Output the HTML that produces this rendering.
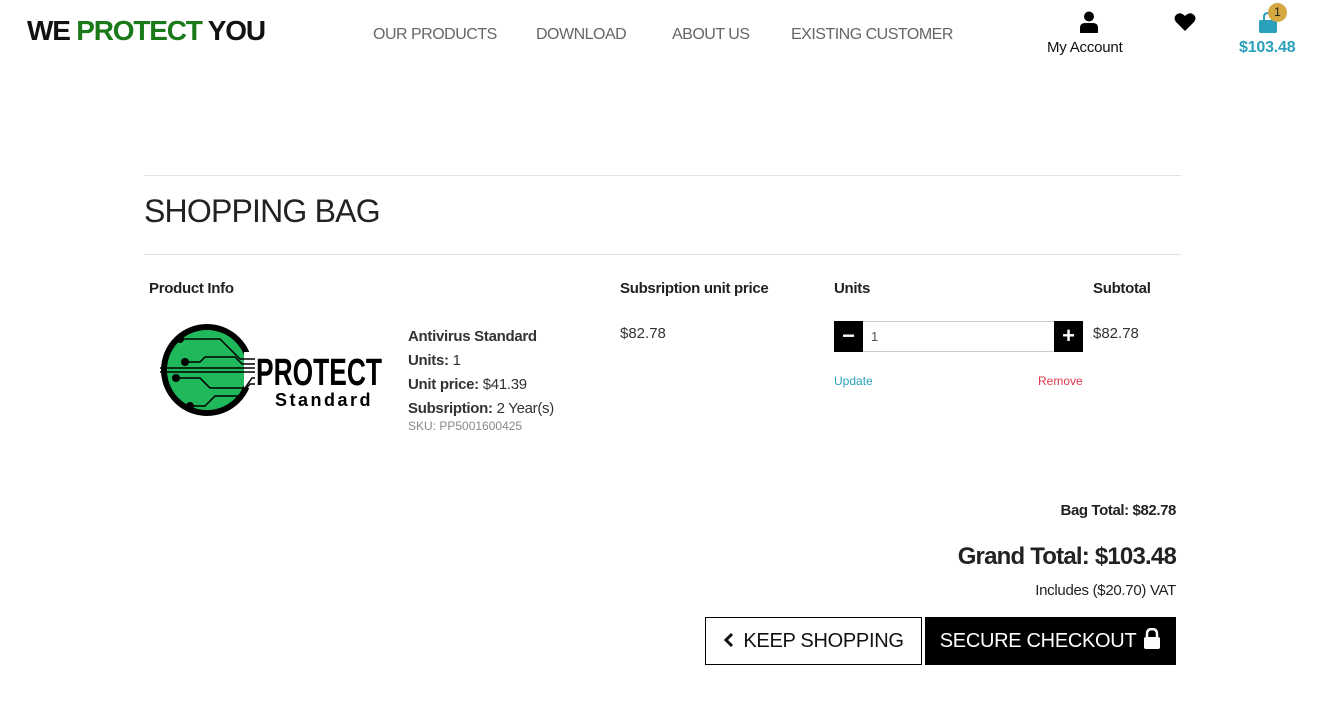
<!DOCTYPE html>
<html><head><meta charset="utf-8"><style>
*{margin:0;padding:0;box-sizing:border-box}
body{width:1325px;height:711px;background:#fff;font-family:"Liberation Sans",sans-serif;color:#222;position:relative;overflow:hidden}
.a{position:absolute;white-space:nowrap}
.nav{font-size:16px;color:#666;top:26px;letter-spacing:-0.5px}
</style></head><body>
<div class="a" style="left:27px;top:15px;font-size:28px;font-weight:bold;letter-spacing:-1.2px;color:#111">WE <span style="color:#1a7a1a">PROTECT</span> YOU</div>
<div class="a nav" style="left:373px">OUR PRODUCTS</div>
<div class="a nav" style="left:536px">DOWNLOAD</div>
<div class="a nav" style="left:672px">ABOUT US</div>
<div class="a nav" style="left:791px">EXISTING CUSTOMER</div>
<svg class="a" style="left:1079px;top:11px" width="20" height="22" viewBox="0 0 20 22"><circle cx="10" cy="5.5" r="5" fill="#000"/><path d="M1 22 V17 Q1 12 6 12 H14 Q19 12 19 17 V22Z" fill="#000"/></svg>
<div class="a" style="left:1047px;top:39px;font-size:15px;color:#111;letter-spacing:-0.2px">My Account</div>
<svg class="a" style="left:1174px;top:12px" width="22" height="20" viewBox="0 0 22 20"><path d="M11 19 L2 10 Q-1 6 2 3 Q6 -1 11 4 Q16 -1 20 3 Q23 6 20 10Z" fill="#000"/></svg>
<svg class="a" style="left:1258px;top:12px" width="22" height="22" viewBox="0 0 22 22"><path d="M6 8 V5 Q6 1 10 1 Q14 1 14 5 V8" stroke="#2aa0bc" stroke-width="2" fill="none"/><rect x="1" y="8" width="18" height="13" rx="1.5" fill="#2aa0bc"/></svg>
<div class="a" style="left:1268px;top:3px;width:19px;height:19px;border-radius:50%;background:#d4a843;font-size:12px;text-align:center;line-height:19px;color:#222">1</div>
<div class="a" style="left:1239px;top:39px;font-size:16px;font-weight:bold;color:#2aa0bc;letter-spacing:-0.2px">$103.48</div>

<div class="a" style="left:144px;top:175px;width:1037px;height:1px;background:#e2e2e2"></div>
<div class="a" style="left:144px;top:193px;font-size:32px;color:#222;letter-spacing:-0.8px">SHOPPING BAG</div>
<div class="a" style="left:144px;top:254px;width:1037px;height:1px;background:#e2e2e2"></div>

<div class="a" style="left:149px;top:280px;font-size:15px;font-weight:bold;letter-spacing:-0.3px">Product Info</div>
<div class="a" style="left:620px;top:280px;font-size:15px;font-weight:bold;letter-spacing:-0.3px">Subsription unit price</div>
<div class="a" style="left:834px;top:280px;font-size:15px;font-weight:bold;letter-spacing:-0.3px">Units</div>
<div class="a" style="left:1093px;top:280px;font-size:15px;font-weight:bold;letter-spacing:-0.3px">Subtotal</div>

<svg class="a" style="left:160px;top:322px" width="230" height="96" viewBox="0 0 230 96">
<circle cx="47" cy="48" r="43" fill="#1fb85a" stroke="#000" stroke-width="6"/>
<rect x="84" y="30" width="12" height="36" fill="#fff"/>
<g stroke="#000" stroke-width="1.5" fill="none">
<path d="M0 46 H95"/><path d="M0 50 H95"/>
<path d="M20 17 H60 L80 37 H95"/><path d="M25 40 H40 L45 35 H75 L82 42 H95"/>
<path d="M16 56 H40 L50 66 H85 L92 56 H95"/><path d="M30 84 H45 L55 74 H80 L90 62 H95"/>
</g>
<g fill="#000"><circle cx="20" cy="17" r="4"/><circle cx="25" cy="40" r="4"/><circle cx="16" cy="56" r="4"/><circle cx="30" cy="84" r="4"/></g>
<text x="96" y="63" font-family="Liberation Sans Narrow,Liberation Sans,sans-serif" font-size="38" font-weight="bold" textLength="126" lengthAdjust="spacingAndGlyphs">PROTECT</text>
<text x="115" y="84" font-family="Liberation Sans,sans-serif" font-size="18" font-weight="bold" letter-spacing="2.5">Standard</text>
</svg>

<div class="a" style="left:408px;top:325px;font-size:15px;line-height:24px;color:#333;letter-spacing:-0.3px">
<b>Antivirus Standard</b><br><b>Units:</b> 1<br><b>Unit price:</b> $41.39<br><b>Subsription:</b> 2 Year(s)</div>
<div class="a" style="left:408px;top:419px;font-size:12px;color:#888">SKU: PP5001600425</div>
<div class="a" style="left:620px;top:325px;font-size:15px;color:#333">$82.78</div>

<div class="a" style="left:834px;top:321px;width:249px;height:31px;border:1px solid #ccc"></div>
<div class="a" style="left:834px;top:321px;width:29px;height:31px;background:#000;color:#fff;font-size:22px;font-weight:bold;text-align:center;line-height:30px">−</div>
<div class="a" style="left:1054px;top:321px;width:29px;height:31px;background:#000;color:#fff;font-size:22px;font-weight:bold;text-align:center;line-height:30px">+</div>
<div class="a" style="left:871px;top:329px;font-size:13px;color:#555">1</div>
<div class="a" style="left:1093px;top:325px;font-size:15px;color:#333">$82.78</div>
<div class="a" style="left:834px;top:374px;font-size:12px;color:#2aa0bc">Update</div>
<div class="a" style="left:1038px;top:374px;font-size:12px;color:#e0394a">Remove</div>

<div class="a" style="right:149px;top:502px;font-size:15px;font-weight:bold;letter-spacing:-0.4px">Bag Total: $82.78</div>
<div class="a" style="right:149px;top:543px;font-size:24px;font-weight:bold;letter-spacing:-0.8px;color:#222">Grand Total: $103.48</div>
<div class="a" style="right:149px;top:582px;font-size:15px;letter-spacing:-0.3px">Includes ($20.70) VAT</div>

<div class="a" style="left:705px;top:617px;width:217px;height:48px;border:1px solid #000;font-size:20px;line-height:46px;text-align:center;letter-spacing:-0.3px;color:#111">
<svg width="12" height="16" viewBox="0 0 12 16" style="vertical-align:-1px;margin-right:8px"><path d="M9 2 L3 8 L9 14" stroke="#111" stroke-width="3" fill="none"/></svg>KEEP SHOPPING</div>
<div class="a" style="left:925px;top:617px;width:251px;height:48px;background:#000;color:#fff;font-size:20px;line-height:48px;text-align:center;letter-spacing:-0.3px">SECURE CHECKOUT
<svg width="18" height="21" viewBox="0 0 18 21" style="vertical-align:-2px;margin-left:2px"><path d="M4 9 V6 Q4 1 9 1 Q14 1 14 6 V9" stroke="#fff" stroke-width="2.5" fill="none"/><rect x="1" y="9" width="16" height="12" rx="2" fill="#fff"/></svg></div>
</body></html>
